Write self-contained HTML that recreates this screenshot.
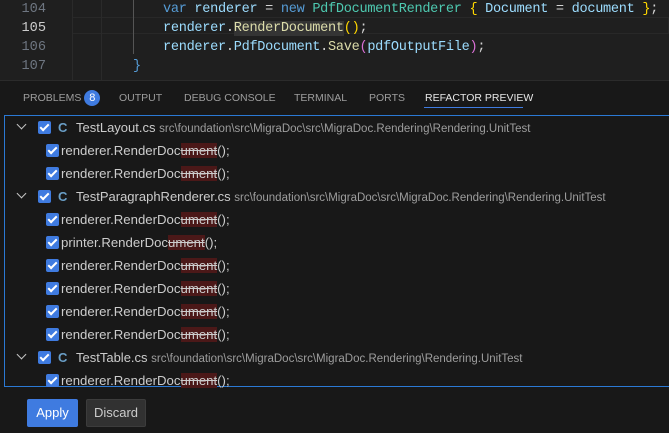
<!DOCTYPE html><html><head><style>
body{margin:0;width:669px;height:433px;background:#181818;overflow:hidden;font-family:"Liberation Sans",sans-serif;position:relative}
.ed{position:absolute;left:0;top:0;width:669px;height:80px;background:#1f1f1f;font-family:"Liberation Mono",monospace;font-size:13.6px}
.ln{position:absolute;width:46px;text-align:right;color:#6e7681}
.code{position:absolute;left:163px;white-space:pre;color:#9cdcfe;font-size:13.6px;letter-spacing:-0.3px}
.g{position:absolute;width:1px;background:#404040}
.tab{position:absolute;top:92px;font-size:10.5px;color:#9d9d9d}
.tree{position:absolute;left:4px;top:115px;width:665px;height:272px;border:1px solid #2b79d4;border-right:none;box-sizing:border-box;background:#181818}
.row{position:absolute;height:23px;font-size:13px;color:#cccccc;white-space:nowrap;line-height:23px}
.row .t{font-size:13.2px}
.cb{position:absolute;top:5px;width:13px;height:13px;background:#3f7be0;border-radius:2px}
.cb:after{content:"";position:absolute;left:4px;top:1px;width:3px;height:7px;border:solid #fff;border-width:0 2px 2px 0;transform:rotate(45deg)}
.del{background:#4b1818;text-decoration:line-through;text-decoration-color:#ccc}
.path{color:#9d9d9d;font-size:11.5px}
.chev{position:absolute;left:13px;top:5px;width:6px;height:6px;border:solid #c5c5c5;border-width:0 1.5px 1.5px 0;transform:rotate(45deg)}
.cs{position:absolute;left:53px;top:0;color:#6a9fc7;font-weight:bold;font-size:13px}
</style></head><body>
<div class="ed">
<div style="position:absolute;left:72px;top:17px;width:597px;height:17px;border:1px solid #282828;box-sizing:border-box"></div>
<div class="g" style="left:72px;top:0;height:80px;background:#2a2a2a"></div>
<div class="g" style="left:101px;top:0;height:80px;background:#2a2a2a"></div>
<div class="g" style="left:133px;top:0;height:54px;background:#555"></div>
<div class="ln" style="top:0;line-height:19px">104</div>
<div class="ln" style="top:19px;line-height:19px;color:#ccc">105</div>
<div class="ln" style="top:38px;line-height:19px">106</div>
<div class="ln" style="top:57px;line-height:19px">107</div>
<div class="code" style="top:0;line-height:19px"><span style="color:#569cd6">var</span> renderer <span style="color:#d4d4d4">=</span> <span style="color:#569cd6">new</span> <span style="color:#4ec9b0">PdfDocumentRenderer</span> <span style="color:#ffd700">{</span> Document <span style="color:#d4d4d4">=</span> document <span style="color:#ffd700">}</span><span style="color:#d4d4d4">;</span></div>
<div class="code" style="top:19px;line-height:19px">renderer<span style="color:#d4d4d4">.</span><span style="color:#dcdcaa;background:#343434">RenderDocument</span><span style="color:#ffd700">()</span><span style="color:#d4d4d4">;</span></div>
<div class="code" style="top:38px;line-height:19px">renderer<span style="color:#d4d4d4">.</span>PdfDocument<span style="color:#d4d4d4">.</span><span style="color:#dcdcaa">Save</span><span style="color:#da70d6">(</span>pdfOutputFile<span style="color:#da70d6">)</span><span style="color:#d4d4d4">;</span></div>
<div class="code" style="top:57px;left:133px;line-height:19px;color:#569cd6">}</div>
</div>
<div style="position:absolute;left:0;top:80px;width:669px;height:1px;background:#2b2b2b"></div>
<div class="tab" style="left:23px;top:90px">PROBLEMS <span style="display:inline-block;width:16px;height:16px;border-radius:8px;background:#3f7be0;color:#fff;text-align:center;line-height:16px;font-size:11px">8</span></div>
<div class="tab" style="left:119px">OUTPUT</div>
<div class="tab" style="left:184px">DEBUG CONSOLE</div>
<div class="tab" style="left:294px">TERMINAL</div>
<div class="tab" style="left:369px">PORTS</div>
<div class="tab" style="left:425px;color:#e7e7e7">REFACTOR PREVIEW</div>
<div style="position:absolute;left:424px;top:107px;width:99px;height:1px;background:#3f7be0"></div>
<div class="tree">
<div class="row" style="left:0;top:0"><div class="chev"></div><div class="cb" style="left:33px"></div><span class="cs">C</span><span style="position:absolute;left:71px">TestLayout.cs <span class="path">src\foundation\src\MigraDoc\src\MigraDoc.Rendering\Rendering.UnitTest</span></span></div>
<div class="row" style="left:0;top:23px"><div class="cb" style="left:41px"></div><span class="t" style="position:absolute;left:56px">renderer.RenderDoc<span class="del">ument</span>();</span></div>
<div class="row" style="left:0;top:46px"><div class="cb" style="left:41px"></div><span class="t" style="position:absolute;left:56px">renderer.RenderDoc<span class="del">ument</span>();</span></div>
<div class="row" style="left:0;top:69px"><div class="chev"></div><div class="cb" style="left:33px"></div><span class="cs">C</span><span style="position:absolute;left:71px">TestParagraphRenderer.cs <span class="path">src\foundation\src\MigraDoc\src\MigraDoc.Rendering\Rendering.UnitTest</span></span></div>
<div class="row" style="left:0;top:92px"><div class="cb" style="left:41px"></div><span class="t" style="position:absolute;left:56px">renderer.RenderDoc<span class="del">ument</span>();</span></div>
<div class="row" style="left:0;top:115px"><div class="cb" style="left:41px"></div><span class="t" style="position:absolute;left:56px">printer.RenderDoc<span class="del">ument</span>();</span></div>
<div class="row" style="left:0;top:138px"><div class="cb" style="left:41px"></div><span class="t" style="position:absolute;left:56px">renderer.RenderDoc<span class="del">ument</span>();</span></div>
<div class="row" style="left:0;top:161px"><div class="cb" style="left:41px"></div><span class="t" style="position:absolute;left:56px">renderer.RenderDoc<span class="del">ument</span>();</span></div>
<div class="row" style="left:0;top:184px"><div class="cb" style="left:41px"></div><span class="t" style="position:absolute;left:56px">renderer.RenderDoc<span class="del">ument</span>();</span></div>
<div class="row" style="left:0;top:207px"><div class="cb" style="left:41px"></div><span class="t" style="position:absolute;left:56px">renderer.RenderDoc<span class="del">ument</span>();</span></div>
<div class="row" style="left:0;top:230px"><div class="chev"></div><div class="cb" style="left:33px"></div><span class="cs">C</span><span style="position:absolute;left:71px">TestTable.cs <span class="path">src\foundation\src\MigraDoc\src\MigraDoc.Rendering\Rendering.UnitTest</span></span></div>
<div class="row" style="left:0;top:253px"><div class="cb" style="left:41px"></div><span class="t" style="position:absolute;left:56px">renderer.RenderDoc<span class="del">ument</span>();</span></div>
</div>
<div style="position:absolute;left:27px;top:399px;width:51px;height:28px;background:#3f7be0;border-radius:2px;color:#fff;font-size:13px;line-height:28px;text-align:center">Apply</div>
<div style="position:absolute;left:86px;top:399px;width:60px;height:28px;background:#313131;border:1px solid #3c3c3c;box-sizing:border-box;border-radius:2px;color:#ccc;font-size:13px;line-height:26px;text-align:center">Discard</div>
</body></html>
